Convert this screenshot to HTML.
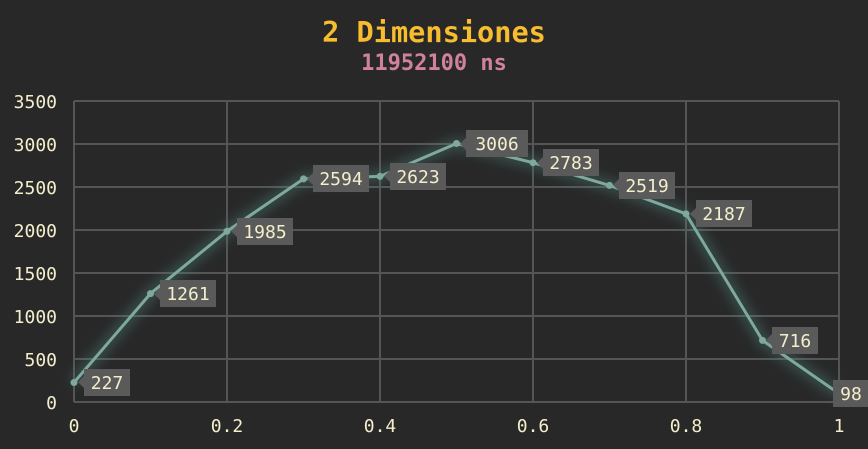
<!DOCTYPE html>
<html><head><style>
html,body{margin:0;padding:0;background:#282828;}
svg{display:block}
</style></head><body>
<svg width="868" height="449" xmlns="http://www.w3.org/2000/svg">
<defs><filter id="g" x="-20%" y="-20%" width="140%" height="140%"><feGaussianBlur stdDeviation="6"/></filter></defs>
<rect width="868" height="449" fill="#282828"/>
<text x="434" y="42" text-anchor="middle" font-family="DejaVu Sans Mono, Liberation Mono, monospace" font-weight="bold" font-size="28.6" fill="#f7bd2e">2 Dimensiones</text>
<text x="434" y="70" text-anchor="middle" font-family="DejaVu Sans Mono, Liberation Mono, monospace" font-weight="bold" font-size="22" fill="#d0829b">11952100 ns</text>
<g stroke="#555" stroke-width="2" fill="none">
<line x1="74" y1="101" x2="839" y2="101"/><line x1="74" y1="144" x2="839" y2="144"/><line x1="74" y1="187" x2="839" y2="187"/><line x1="74" y1="230" x2="839" y2="230"/><line x1="74" y1="273" x2="839" y2="273"/><line x1="74" y1="316" x2="839" y2="316"/><line x1="74" y1="359" x2="839" y2="359"/><line x1="74" y1="402" x2="839" y2="402"/>
<line x1="74" y1="101" x2="74" y2="402"/><line x1="227" y1="101" x2="227" y2="402"/><line x1="380" y1="101" x2="380" y2="402"/><line x1="533" y1="101" x2="533" y2="402"/><line x1="686" y1="101" x2="686" y2="402"/><line x1="839" y1="101" x2="839" y2="402"/>
</g>
<g font-family="DejaVu Sans Mono, Liberation Mono, monospace" font-size="18" fill="#f3eecb" text-anchor="end">
<text x="57" y="108">3500</text><text x="57" y="151">3000</text><text x="57" y="194">2500</text><text x="57" y="237">2000</text><text x="57" y="280">1500</text><text x="57" y="323">1000</text><text x="57" y="366">500</text><text x="57" y="409">0</text>
</g>
<g font-family="DejaVu Sans Mono, Liberation Mono, monospace" font-size="18" fill="#f3eecb" text-anchor="middle">
<text x="74" y="432">0</text><text x="227" y="432">0.2</text><text x="380" y="432">0.4</text><text x="533" y="432">0.6</text><text x="686" y="432">0.8</text><text x="839" y="432">1</text>
</g>
<polyline points="74,382.5 150.5,293.6 227,231.3 303.5,178.9 380,176.4 456.5,143.5 533,162.7 609.5,185.4 686,213.9 762.5,340.4 839,393.6" fill="none" stroke="#4f8f86" stroke-opacity="0.45" stroke-width="10" filter="url(#g)"/>
<polyline points="74,382.5 150.5,293.6 227,231.3 303.5,178.9 380,176.4 456.5,143.5 533,162.7 609.5,185.4 686,213.9 762.5,340.4 839,393.6" fill="none" stroke="#7fa99c" stroke-width="3" stroke-linejoin="round"/>
<g fill="#7fa99c">
<circle cx="74" cy="382.5" r="3.5"/><circle cx="150.5" cy="293.6" r="3.5"/><circle cx="227" cy="231.3" r="3.5"/><circle cx="303.5" cy="178.9" r="3.5"/><circle cx="380" cy="176.4" r="3.5"/><circle cx="456.5" cy="143.5" r="3.5"/><circle cx="533" cy="162.7" r="3.5"/><circle cx="609.5" cy="185.4" r="3.5"/><circle cx="686" cy="213.9" r="3.5"/><circle cx="762.5" cy="340.4" r="3.5"/><circle cx="839" cy="393.6" r="3.5"/>
</g>
<g fill="#5a5a5a">
<rect x="84" y="369" width="46" height="27"/><path d="M78,382 L84,376 L84,388Z"/>
<rect x="160" y="280" width="56" height="27"/><path d="M154,294 L160,288 L160,300Z"/>
<rect x="237" y="218" width="56" height="27"/><path d="M231,231 L237,225 L237,237Z"/>
<rect x="313" y="165" width="56" height="27"/><path d="M307,179 L313,173 L313,185Z"/>
<rect x="390" y="163" width="56" height="27"/><path d="M384,176 L390,170 L390,182Z"/>
<rect x="466" y="130" width="62" height="27"/><path d="M460,144 L466,138 L466,150Z"/>
<rect x="543" y="149" width="56" height="27"/><path d="M537,163 L543,157 L543,169Z"/>
<rect x="619" y="172" width="56" height="27"/><path d="M613,185 L619,179 L619,191Z"/>
<rect x="696" y="200" width="56" height="27"/><path d="M690,214 L696,208 L696,220Z"/>
<rect x="772" y="327" width="46" height="27"/><path d="M766,340 L772,334 L772,346Z"/>
<rect x="833" y="380" width="35" height="27"/>
</g>
<g font-family="DejaVu Sans Mono, Liberation Mono, monospace" font-size="18" fill="#f3eecb" text-anchor="middle">
<text x="107" y="389">227</text><text x="188" y="300">1261</text><text x="265" y="238">1985</text><text x="341" y="185">2594</text><text x="418" y="183">2623</text><text x="497" y="150">3006</text><text x="571" y="169">2783</text><text x="647" y="192">2519</text><text x="724" y="220">2187</text><text x="795" y="347">716</text><text x="851" y="400">98</text>
</g>
</svg>
</body></html>
